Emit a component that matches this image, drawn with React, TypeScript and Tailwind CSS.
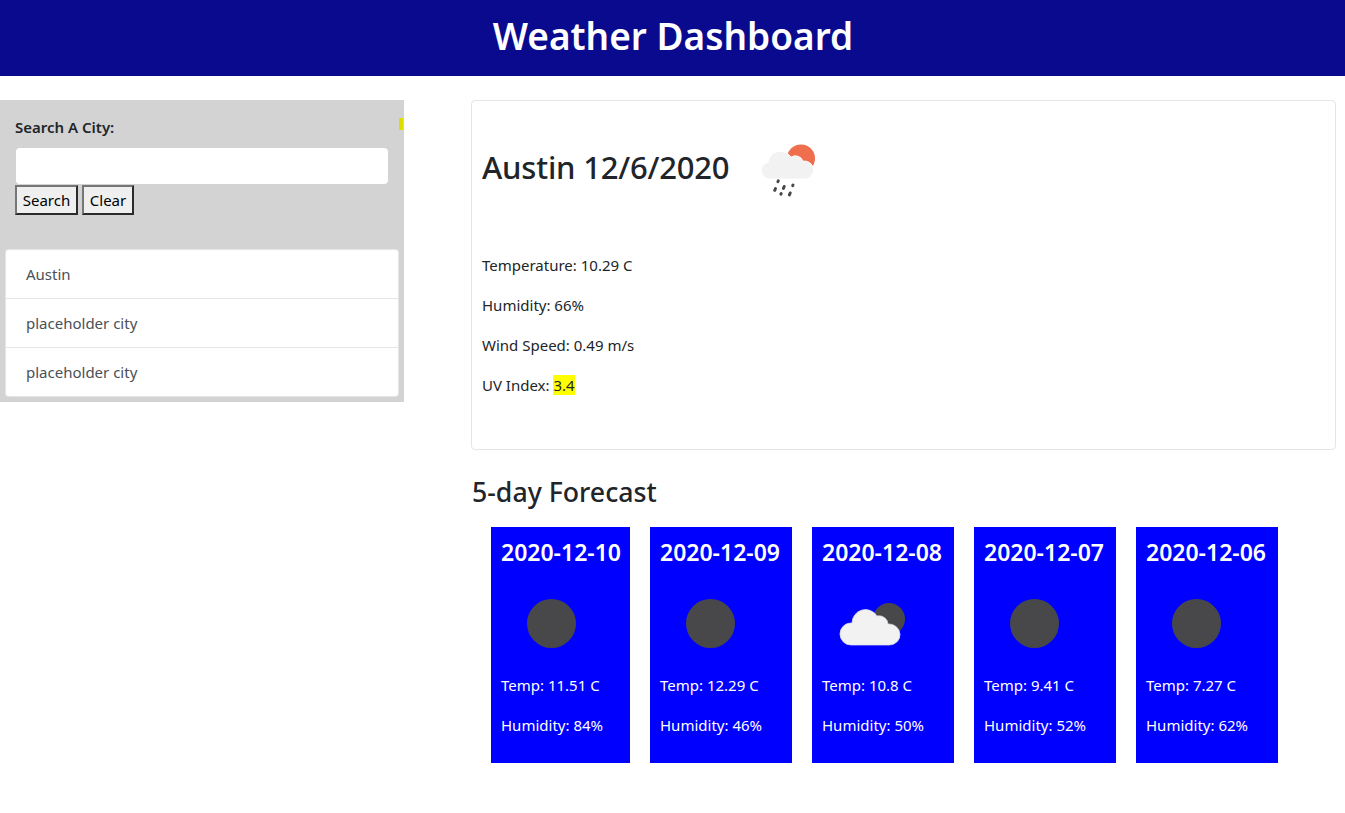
import { FC } from "react";

const FONT = "font-['Noto_Sans','Open_Sans',sans-serif]";

const forecast = [
  { date: "2020-12-10", temp: "11.51", humidity: 84, icon: "clear", width: "w-[139px]" },
  { date: "2020-12-09", temp: "12.29", humidity: 46, icon: "clear", width: "w-[142px]" },
  { date: "2020-12-08", temp: "10.8", humidity: 50, icon: "cloudy", width: "w-[142px]" },
  { date: "2020-12-07", temp: "9.41", humidity: 52, icon: "clear", width: "w-[142px]" },
  { date: "2020-12-06", temp: "7.27", humidity: 62, icon: "clear", width: "w-[142px]" },
];

const ClearIcon: FC = () => (
  <svg viewBox="0 0 100 100" className="h-[100px] w-[100px] block">
    <circle cx="50.500" cy="50.500" r="24.500" fill="#48484a" />
  </svg>
);

const CloudyIcon: FC = () => (
  <svg viewBox="0 0 100 100" className="h-[100px] w-[100px] block">
    <circle cx="67" cy="46" r="16" fill="#48484a" />
    <path
      d="M29 72a11 11 0 0 1 0-22h1a13.500 13.500 0 0 1 25-7a9 9 0 0 1 11 8a11 11 0 0 1 12 10.500a10.500 10.500 0 0 1-11 10.500z"
      fill="#f2f2f2"
      stroke="#dcdcec"
      strokeWidth="0.75"
    />
  </svg>
);

const RainIcon: FC = () => (
  <svg viewBox="0 0 100 100" className="h-[100px] w-[100px] block">
    <circle cx="63" cy="40.500" r="14" fill="#ee6e4d" />
    <path
      d="M32 61a8.500 8.500 0 0 1-2-16.800a12.500 12.500 0 0 1 23-5a8 8 0 0 1 12 4a8.600 8.600 0 0 1 3 17.800z"
      fill="#f2f2f2"
      stroke="#ffffff"
      strokeWidth="1"
    />
    <g stroke="#48484a" strokeWidth="3" strokeLinecap="round">
      <path d="M40.300 62.800l-.4 .8" />
      <path d="M37.500 70.500l-.8 1.800" />
      <path d="M46.200 68.500l-.8 1.900" />
      <path d="M55 67l-.3 .6" />
      <path d="M43.200 75.500l-.3 .6" />
      <path d="M52.200 75l-.8 1.900" />
    </g>
  </svg>
);

const ForecastCard: FC<(typeof forecast)[number]> = ({ date, temp, humidity, icon, width }) => (
  <div className={`${width} h-[236px] shrink-0 bg-[#0000ff] p-2.5 text-white`}>
    <h4 className="mt-px mb-[7px] whitespace-nowrap text-[23px] leading-[28px] font-semibold">{date}</h4>
    {icon === "cloudy" ? <CloudyIcon /> : <ClearIcon />}
    <p className="mb-4 text-[15px] leading-6">Temp: {temp} C</p>
    <p className="text-[15px] leading-6">Humidity: {humidity}%</p>
  </div>
);

const App: FC = () => {
  return (
    <div className={`${FONT} min-h-[813px] bg-white text-[#212529]`}>
      <header className="flex h-[76px] items-center justify-center bg-[#0a0a8f] pb-[5px] pl-px">
        <h1 className="text-[37px] font-semibold text-white">Weather Dashboard</h1>
      </header>

      <div className="mt-6 flex items-start">
        <aside className="relative h-[302px] w-[404px] shrink-0 bg-[#d3d3d3] pt-[15px]">
          <span className="absolute right-px top-[18px] h-3 w-1 bg-[#dddd00]" />
          <form className="pl-[15px] pr-4">
            <label className="mb-[9px] block text-[15px] leading-6 font-semibold">Search A City:</label>
            <input type="text" className="ml-px block h-9 w-[372px] rounded bg-white" />
            <div className="mt-px flex gap-1">
              <button type="button" className="h-[30px] w-[63px] border-2 border-t-[#767676] border-r-[#2b2b2b] border-b-[#2b2b2b] border-l-[#767676] bg-[#efefef] text-[15px] text-black">
                Search
              </button>
              <button type="button" className="h-[30px] w-[52px] border-2 border-t-[#767676] border-r-[#2b2b2b] border-b-[#2b2b2b] border-l-[#767676] bg-[#efefef] text-[15px] text-black">
                Clear
              </button>
            </div>
          </form>
          <ul className="mt-[34px] ml-[5px] w-[394px] rounded border border-black/10 bg-white text-[15px] leading-6 text-[#495057]">
            {["Austin", "placeholder city", "placeholder city"].map((city, i) => (
              <li key={i} className="h-[49px] border-b border-black/10 px-5 py-3 last:h-[48px] last:border-b-0">
                {city}
              </li>
            ))}
          </ul>
        </aside>

        <main className="ml-[67px] w-[865px] shrink-0">
          <section className="h-[350px] rounded border border-black/10 px-2.5 pt-[17px]">
            <div className="flex items-center">
              <h2 className="mb-[2px] w-[256px] shrink-0 whitespace-nowrap text-[31px] leading-[38px] font-medium tracking-[-0.2px]">Austin 12/6/2020</h2>
              <RainIcon />
            </div>
            <p className="mt-[35px] mb-4 text-[15px] leading-6">Temperature: 10.29 C</p>
            <p className="mb-4 text-[15px] leading-6">Humidity: 66%</p>
            <p className="mb-4 text-[15px] leading-6">Wind Speed: 0.49 m/s</p>
            <p className="text-[15px] leading-6">
              UV Index: <span className="bg-[#ffff00]">3.4</span>
            </p>
          </section>

          <h3 className="mt-6 pl-px text-[26.700px] leading-[36px] font-medium">5-day Forecast</h3>

          <div className="mt-[17px] flex gap-5 pl-5">
            {forecast.map((day) => (
              <ForecastCard key={day.date} {...day} />
            ))}
          </div>
        </main>
      </div>
    </div>
  );
};

export default App;
